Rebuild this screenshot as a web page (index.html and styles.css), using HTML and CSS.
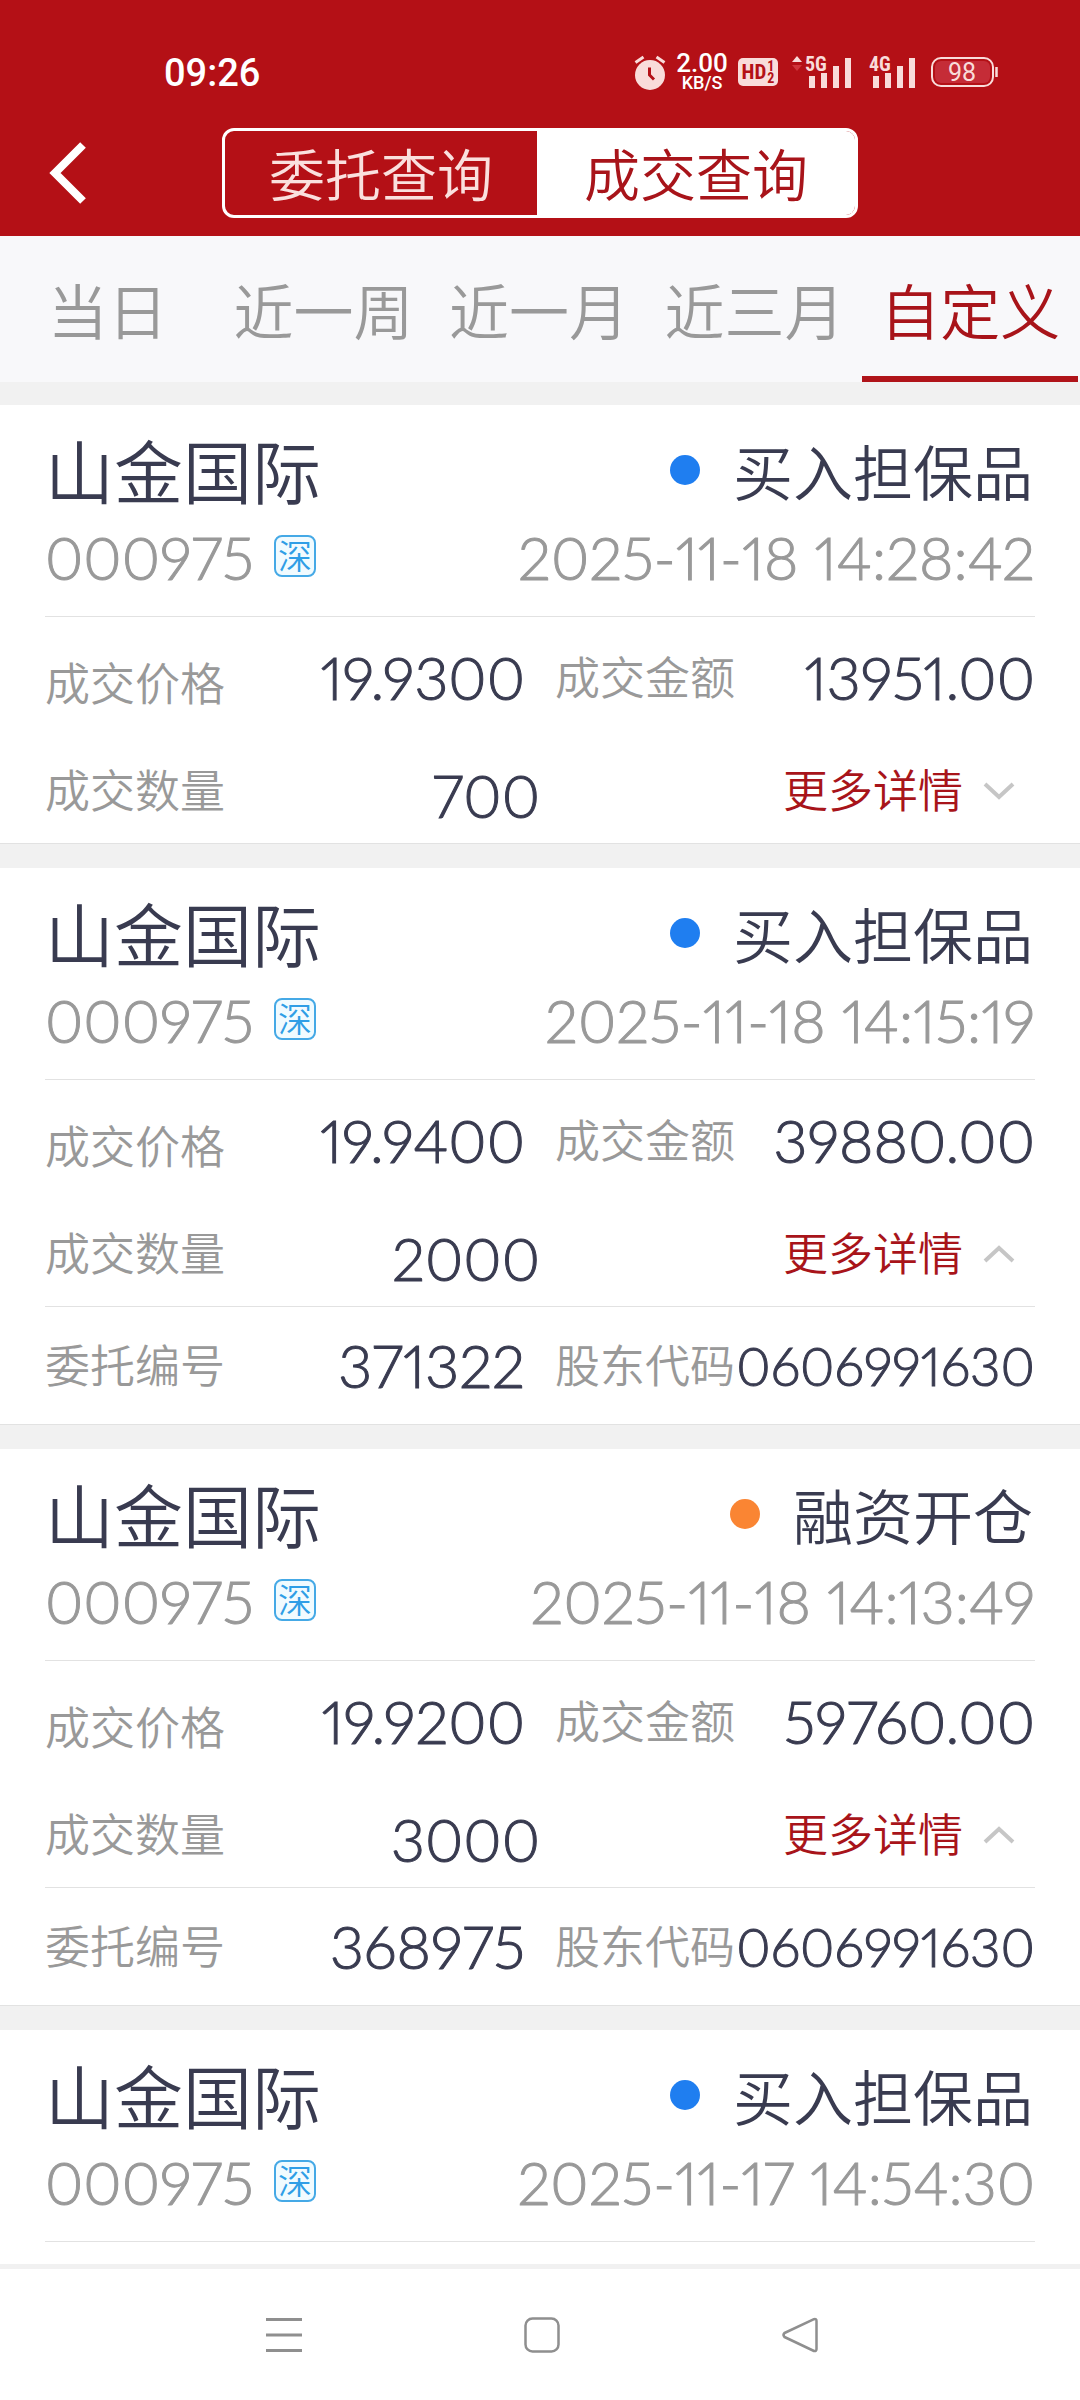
FILE: index.html
```html
<!DOCTYPE html>
<html lang="zh-CN">
<head>
<meta charset="utf-8">
<meta name="viewport" content="width=device-width, initial-scale=1">
<title>成交查询</title>
<link rel="stylesheet" href="styles.css">
</head>
<body>
<header class="top">
  <div class="status">
    <time class="clock">09:26</time>
    <div class="status-icons">
      <svg class="alarm" width="32" height="36" viewBox="0 0 32 36" aria-hidden="true">
        <circle cx="16" cy="21" r="15" fill="#f9dcda"/>
        <path d="M1.500 8.500 9.500 3M30.500 8.500 22.500 3" stroke="#f9dcda" stroke-width="3" fill="none"/>
        <path d="M15.500 13.500V21L20 25.500" stroke="#b41016" stroke-width="3" fill="none"/>
      </svg>
      <div class="speed"><span class="speed-num">2.00</span><span class="speed-unit">KB/S</span></div>
      <div class="hd"><span class="hd-main">HD</span><span class="hd-sub"><span>1</span><span>2</span></span></div>
      <svg class="signal-5g" width="60" height="34" viewBox="0 0 60 34" aria-hidden="true">
        <path d="M0 7 5 1l5 6z" fill="#f9dcda"/><path d="M0 10h10l-5 6z" fill="#d0353b"/>
        <text x="13" y="16" class="gen">5G</text>
        <path d="M17 21h6v12h-6zM29 18h6v15h-6zM41 11h6v22h-6zM53 3h6v30h-6z" fill="#f9dcda"/>
      </svg>
      <svg class="signal-4g" width="47" height="34" viewBox="0 0 47 34" aria-hidden="true">
        <text x="0" y="16" class="gen">4G</text>
        <path d="M4 21h6v12H4zM16 18h6v15h-6zM28 11h6v22h-6zM40 3h6v30h-6z" fill="#f9dcda"/>
      </svg>
      <svg class="battery" width="68" height="32" viewBox="0 0 68 32" aria-hidden="true">
        <rect x="1" y="2" width="61" height="28" rx="9" fill="none" stroke="#f9dcda" stroke-width="2"/>
        <rect x="4" y="5" width="55" height="22" rx="6" fill="#c52c37"/>
        <path d="M65.500 11v10" stroke="#f9dcda" stroke-width="2.500"/>
        <text x="31" y="25" text-anchor="middle" class="level">98</text>
      </svg>
    </div>
  </div>
  <nav class="bar">
    <button class="back" type="button" aria-label="返回">
      <svg width="38" height="64" viewBox="0 0 38 64"><path d="M34 4 6 32l28 28" fill="none" stroke="#fff" stroke-width="8"/></svg>
    </button>
    <div class="segment">
      <button class="seg" type="button">委托查询</button>
      <button class="seg seg-on" type="button">成交查询</button>
    </div>
  </nav>
</header>

<nav class="tabs">
  <button class="tab" type="button">当日</button>
  <button class="tab" type="button">近一周</button>
  <button class="tab" type="button">近一月</button>
  <button class="tab" type="button">近三月</button>
  <button class="tab tab-on" type="button">自定义</button>
</nav>

<main class="list">
  <article class="card">
    <div class="head">
      <div class="line"><h2 class="name">山金国际</h2><span class="kind"><i class="dot"></i>买入担保品</span></div>
      <div class="line line-sub"><span class="code">000975<span class="badge">深</span></span><time class="date">2025-11-18 14:28:42</time></div>
    </div>
    <div class="rows">
      <div class="row"><div class="cell"><span class="label label-low">成交价格</span><span class="value">19.9300</span></div><div class="cell"><span class="label">成交金额</span><span class="value">13951.00</span></div></div>
      <div class="row row-qty"><div class="cell"><span class="label">成交数量</span><span class="value value-qty">700</span></div><button class="more" type="button">更多详情<svg class="chev" width="32" height="18" viewBox="0 0 32 18"><path d="M2 2 16 15 30 2" fill="none" stroke="#c6c6c6" stroke-width="4"/></svg></button></div>
    </div>
  </article>

  <article class="card">
    <div class="head">
      <div class="line"><h2 class="name">山金国际</h2><span class="kind"><i class="dot"></i>买入担保品</span></div>
      <div class="line line-sub"><span class="code">000975<span class="badge">深</span></span><time class="date">2025-11-18 14:15:19</time></div>
    </div>
    <div class="rows">
      <div class="row"><div class="cell"><span class="label label-low">成交价格</span><span class="value">19.9400</span></div><div class="cell"><span class="label">成交金额</span><span class="value">39880.00</span></div></div>
      <div class="row row-qty"><div class="cell"><span class="label">成交数量</span><span class="value value-qty">2000</span></div><button class="more" type="button">更多详情<svg class="chev" width="32" height="18" viewBox="0 0 32 18"><path d="M2 16 16 3 30 16" fill="none" stroke="#c6c6c6" stroke-width="4"/></svg></button></div>
      <div class="row row-extra"><div class="cell"><span class="label">委托编号</span><span class="value">371322</span></div><div class="cell"><span class="label">股东代码</span><span class="value value-small">0606991630</span></div></div>
    </div>
  </article>

  <article class="card">
    <div class="head">
      <div class="line"><h2 class="name">山金国际</h2><span class="kind"><i class="dot dot-orange"></i>融资开仓</span></div>
      <div class="line line-sub"><span class="code">000975<span class="badge">深</span></span><time class="date">2025-11-18 14:13:49</time></div>
    </div>
    <div class="rows">
      <div class="row"><div class="cell"><span class="label label-low">成交价格</span><span class="value">19.9200</span></div><div class="cell"><span class="label">成交金额</span><span class="value">59760.00</span></div></div>
      <div class="row row-qty"><div class="cell"><span class="label">成交数量</span><span class="value value-qty">3000</span></div><button class="more" type="button">更多详情<svg class="chev" width="32" height="18" viewBox="0 0 32 18"><path d="M2 16 16 3 30 16" fill="none" stroke="#c6c6c6" stroke-width="4"/></svg></button></div>
      <div class="row row-extra"><div class="cell"><span class="label">委托编号</span><span class="value">368975</span></div><div class="cell"><span class="label">股东代码</span><span class="value value-small">0606991630</span></div></div>
    </div>
  </article>

  <article class="card card-last">
    <div class="head">
      <div class="line"><h2 class="name">山金国际</h2><span class="kind"><i class="dot"></i>买入担保品</span></div>
      <div class="line line-sub"><span class="code">000975<span class="badge">深</span></span><time class="date">2025-11-17 14:54:30</time></div>
    </div>
  </article>
</main>

<footer class="sysnav">
  <button class="sys" type="button" aria-label="最近任务"><svg width="36" height="36" viewBox="0 0 36 36"><path d="M0 2.500h36M0 18h36M0 33.500h36" stroke="#8f8f8f" stroke-width="3"/></svg></button>
  <button class="sys" type="button" aria-label="主屏幕"><svg width="36" height="36" viewBox="0 0 36 36"><rect x="1.500" y="1.500" width="33" height="33" rx="7" fill="none" stroke="#8f8f8f" stroke-width="2.500"/></svg></button>
  <button class="sys" type="button" aria-label="返回"><svg width="36" height="36" viewBox="0 0 36 36"><path d="M32 2.200 2.500 16Q0.500 18 2.500 20L32 34Q34.500 34.500 34.500 32V4Q34.500 1.500 32 2.200z" fill="none" stroke="#8f8f8f" stroke-width="2.500" stroke-linejoin="round"/></svg></button>
</footer>
</body>
</html>
```
FILE: styles.css
```css
* { box-sizing: border-box; }

body {
  margin: 0;
  min-height: 100vh;
  display: flex;
  flex-direction: column;
  background: #fff;
  color: #393b50;
  font-family: Lato, "Noto Sans CJK SC", sans-serif;
  font-weight: 350;
}

button {
  margin: 0;
  padding: 0;
  border: 0;
  background: none;
  color: inherit;
  font: inherit;
}

svg { display: block; overflow: visible; }

/* status bar and title bar */
.top { background: #b41016; color: #fff; padding-bottom: 18px; }

.status {
  height: 128px;
  padding: 16px 81px 0 164px;
  display: flex;
  align-items: center;
  justify-content: space-between;
}
.clock { font: 500 38px/40px Roboto, sans-serif; padding-top: 2px; }
.status-icons { display: flex; align-items: center; color: #f9dcda; }
.speed {
  width: 54px;
  margin: 0 9px;
  display: flex;
  flex-direction: column;
  align-items: center;
  font-family: Roboto, sans-serif;
  font-weight: 500;
  color: #fff;
}
.speed-num { font-size: 26px; line-height: 22px; }
.speed-unit { font-size: 18px; line-height: 18px; }
.hd {
  width: 40px;
  height: 28px;
  margin-right: 14px;
  border-radius: 5px;
  background: #f9dcda;
  color: #b41016;
  display: flex;
  align-items: center;
  justify-content: center;
  font-family: "Roboto Condensed", "Liberation Sans Narrow", Roboto, sans-serif;
  font-weight: 700;
}
.hd-main { font-size: 21px; line-height: 28px; }
.hd-sub { display: flex; flex-direction: column; padding-left: 1px; font-size: 14px; line-height: 12px; }
.gen { font: 700 20px "Roboto Condensed", "Liberation Sans Narrow", Roboto, sans-serif; fill: #f9dcda; }
.level { font: 400 25px Roboto, sans-serif; fill: #f9dcda; }
.signal-4g { margin: 0 15px 0 17px; }

.bar { display: grid; grid-template-columns: 222px 1fr 222px; align-items: center; }
.back { justify-self: start; padding-left: 49px; }
.segment {
  display: grid;
  grid-template-columns: 312fr 318fr;
  height: 90px;
  border: 3px solid #fff;
  border-radius: 12px;
  overflow: hidden;
}
.seg { padding-top: 4px; font-size: 56px; line-height: 80px; color: #fae0de; }
.seg-on { background: #fff; color: #a8141a; }

/* period tabs */
.tabs { display: flex; height: 146px; padding-right: 2px; background: #f8f8fa; }
.tab {
  flex: 1;
  padding-top: 12px;
  font-size: 60px;
  line-height: 128px;
  color: #999;
  white-space: nowrap;
  border-bottom: 6px solid transparent;
}
.tab-on { color: #a8141a; border-color: #b0141a; }

/* trade list */
.list { flex: 1; background: #f1f1f1; padding-top: 23px; }
.card { background: #fff; margin-bottom: 24px; border-bottom: 1px solid #e2e2e2; }
.head { margin: 0 45px; padding: 30px 0 16px; border-bottom: 1px solid #e2e2e2; }
.line { display: flex; align-items: center; justify-content: space-between; height: 76px; }
.line-sub { height: 89px; padding-top: 4px; color: #999; }
.name { margin: 0; font-size: 69px; line-height: 76px; font-weight: inherit; }
.kind { display: flex; align-items: center; margin-right: 2px; font-size: 60px; line-height: 76px; }
.dot { width: 30px; height: 30px; margin: 0 33px 6px 0; border-radius: 50%; background: #1f7ef0; }
.dot-orange { background: #fa8533; }
.code, .date, .value {
  font-size: 59px;
  line-height: 72px;
  font-feature-settings: "pnum";
  -webkit-text-stroke: 1px;
}
.code { display: flex; align-items: center; }
.badge {
  width: 42px;
  height: 42px;
  margin: 0 0 4px 20px;
  border: 2px solid #45a9e6;
  border-radius: 8px;
  background: #f1fbff;
  color: #2f9ee6;
  font-size: 34px;
  line-height: 38px;
  text-align: center;
  -webkit-text-stroke: 0;
}

.rows { padding-top: 6px; }
.row {
  display: grid;
  grid-template-columns: minmax(0, 480fr) minmax(0, 480fr);
  column-gap: 30px;
  margin: 0 45px;
  height: 110px;
  align-items: center;
}
.cell { display: flex; align-items: center; justify-content: space-between; }
.label { font-size: 45px; line-height: 56px; color: #999; white-space: nowrap; }
.label-low { padding-top: 12px; }
.row-qty {
  height: 110px;
  padding-top: 5px;
  grid-template-columns: minmax(0, 495fr) minmax(0, 465fr);
}
.value-qty { padding-top: 10px; }
.value-small { font-size: 53px; }
.more {
  display: flex;
  align-items: center;
  justify-self: end;
  gap: 20px;
  margin-right: 20px;
  font-size: 45px;
  line-height: 56px;
  color: #a8141a;
}
.row-extra { height: 118px; border-top: 1px solid #e2e2e2; }
.card-last { margin: 0; border: 0; padding-bottom: 22px; }

/* system navigation */
.sysnav {
  height: 137px;
  padding-left: 4px;
  border-top: 5px solid #f1f1f1;
  background: #fff;
  display: flex;
  align-items: center;
  justify-content: center;
  gap: 222px;
}
```
